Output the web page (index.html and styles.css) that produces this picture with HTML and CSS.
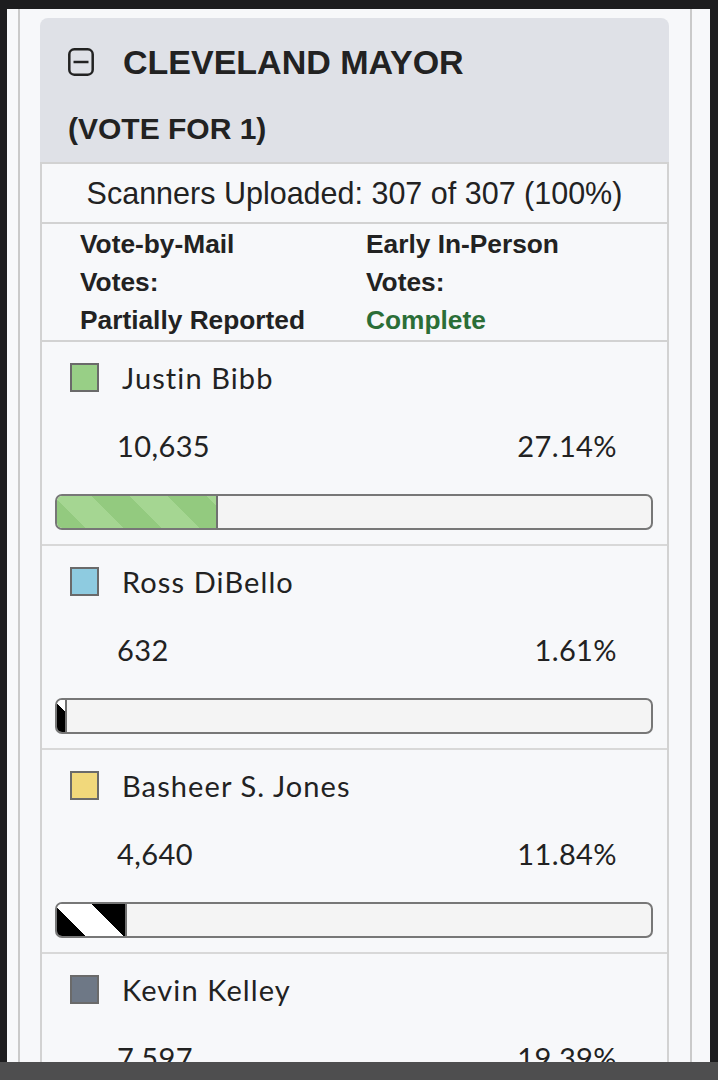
FILE: index.html
```html
<!DOCTYPE html>
<html lang="en">
<head>
    <meta charset="UTF-8">
    <meta name="viewport" content="width=device-width, initial-scale=1.0">
    <title>Cleveland Mayor - Results</title>
    <link rel="stylesheet" href="styles.css">
</head>
<body>
    <div class="screen">
        <div class="column">
            <div class="contest">
                <div class="contest-header">
                    <div class="contest-title">
                        <svg class="toggle" width="26" height="28" viewBox="0 0 26 28">
                            <rect x="1.3" y="1.3" width="23.4" height="25.4" rx="5" fill="none" stroke="#222" stroke-width="2.5"/>
                            <line x1="5.5" y1="14" x2="20.5" y2="14" stroke="#222" stroke-width="2.5"/>
                        </svg>
                        <span>CLEVELAND MAYOR</span>
                    </div>
                    <div class="contest-sub">(VOTE FOR 1)</div>
                </div>

                <div class="contest-body">
                    <div class="scanners">Scanners Uploaded: 307 of 307 (100%)</div>

                    <div class="status">
                        <div>Vote-by-Mail<br>Votes:<br>Partially Reported</div>
                        <div>Early In-Person<br>Votes:<br><span class="complete">Complete</span></div>
                    </div>

                    <div class="candidate">
                        <div class="cand-name">
                            <span class="swatch green"></span>
                            Justin Bibb
                        </div>
                        <div class="cand-nums">
                            <span>10,635</span>
                            <span>27.14%</span>
                        </div>
                        <div class="bar">
                            <div class="fill fill-green" style="width: 27.14%;"></div>
                        </div>
                    </div>

                    <div class="candidate">
                        <div class="cand-name">
                            <span class="swatch blue"></span>
                            Ross DiBello
                        </div>
                        <div class="cand-nums">
                            <span>632</span>
                            <span>1.61%</span>
                        </div>
                        <div class="bar">
                            <div class="fill fill-dark" style="width: 1.61%;"></div>
                        </div>
                    </div>

                    <div class="candidate">
                        <div class="cand-name">
                            <span class="swatch yellow"></span>
                            Basheer S. Jones
                        </div>
                        <div class="cand-nums">
                            <span>4,640</span>
                            <span>11.84%</span>
                        </div>
                        <div class="bar">
                            <div class="fill fill-dark" style="width: 11.84%;"></div>
                        </div>
                    </div>

                    <div class="candidate">
                        <div class="cand-name">
                            <span class="swatch slate"></span>
                            Kevin Kelley
                        </div>
                        <div class="cand-nums">
                            <span>7,597</span>
                            <span>19.39%</span>
                        </div>
                        <div class="bar">
                            <div class="fill fill-dark" style="width: 19.39%;"></div>
                        </div>
                    </div>
                </div>
            </div>
        </div>
    </div>

    <div class="bottom-bar"></div>
</body>
</html>
```

FILE: styles.css
```css
* {
    margin: 0;
    padding: 0;
    box-sizing: border-box;
}

body {
    font-family: "Liberation Sans", Arial, sans-serif;
    color: #222;
    background: #1d1d1f;
    height: 100vh;
    overflow: hidden;
}

/* 页面区域 */
.screen {
    margin: 9px 8px 0 7px;
    height: calc(100vh - 9px);
    background: #f7f8fa;
}

.column {
    height: 100%;
    margin: 0 18px 0 11px;
    padding: 9px 21px 0 20px;
    border-left: 2px solid #cacaca;
    border-right: 2px solid #cacaca;
}

/* 标题 */
.contest-header {
    background: #dfe1e7;
    border-radius: 8px 8px 0 0;
    padding: 22px 28px 13px;
}

.contest-title {
    display: flex;
    align-items: center;
    gap: 29px;
    height: 44px;
    font-size: 34px;
    font-weight: bold;
}

.toggle {
    flex-shrink: 0;
}

.contest-sub {
    margin-top: 25px;
    line-height: 40px;
    font-size: 30px;
    font-weight: bold;
}

/* 内容 */
.contest-body {
    border: 2px solid #d2d2d2;
    border-bottom: none;
    background: #f7f8fa;
}

.scanners {
    padding: 12px 0;
    line-height: 34px;
    font-size: 30.5px;
    text-align: center;
    border-bottom: 2px solid #d2d2d2;
}

.status {
    display: grid;
    grid-template-columns: 286px 1fr;
    padding: 1px 16px 1px 38px;
    font-size: 26.3px;
    font-weight: bold;
    line-height: 38px;
    border-bottom: 2px solid #d2d2d2;
}

.complete {
    color: #2b6e37;
}

/* 候选人 */
.candidate {
    padding: 19px 14px 14px 13px;
    font-family: Lato, "Open Sans", sans-serif;
    font-size: 29px;
    border-bottom: 2px solid #d8d8d8;
}

.cand-name {
    display: flex;
    align-items: center;
    gap: 23px;
    height: 32px;
    padding-left: 15px;
    letter-spacing: 1.1px;
}

.swatch {
    width: 29px;
    height: 29px;
    border: 2px solid #6a6a6a;
}

.green { background: #98cf86; }
.blue { background: #8ecbe0; }
.yellow { background: #f1d87b; }
.slate { background: #6e7886; }

.cand-nums {
    display: flex;
    justify-content: space-between;
    margin-top: 36px;
    padding: 0 36px 0 62px;
    line-height: 34px;
    letter-spacing: 0.4px;
}

.bar {
    margin-top: 31px;
    height: 36px;
    border: 2px solid #777;
    border-radius: 7px;
    background: #f4f4f4;
    overflow: hidden;
}

.fill {
    height: 100%;
    border-right: 2px solid #707070;
}

.fill-green {
    background: repeating-linear-gradient(45deg,
        #93ca7f 0 20px, #a5d692 20px 47px, #93ca7f 47px 54px);
}

.fill-dark {
    background: repeating-linear-gradient(45deg,
        #000 0 20px, #fff 20px 47px, #000 47px 54px);
}

/* 底部栏 */
.bottom-bar {
    position: fixed;
    left: 0;
    right: 0;
    bottom: 0;
    height: 18px;
    background: #4e4e4f;
}
```
